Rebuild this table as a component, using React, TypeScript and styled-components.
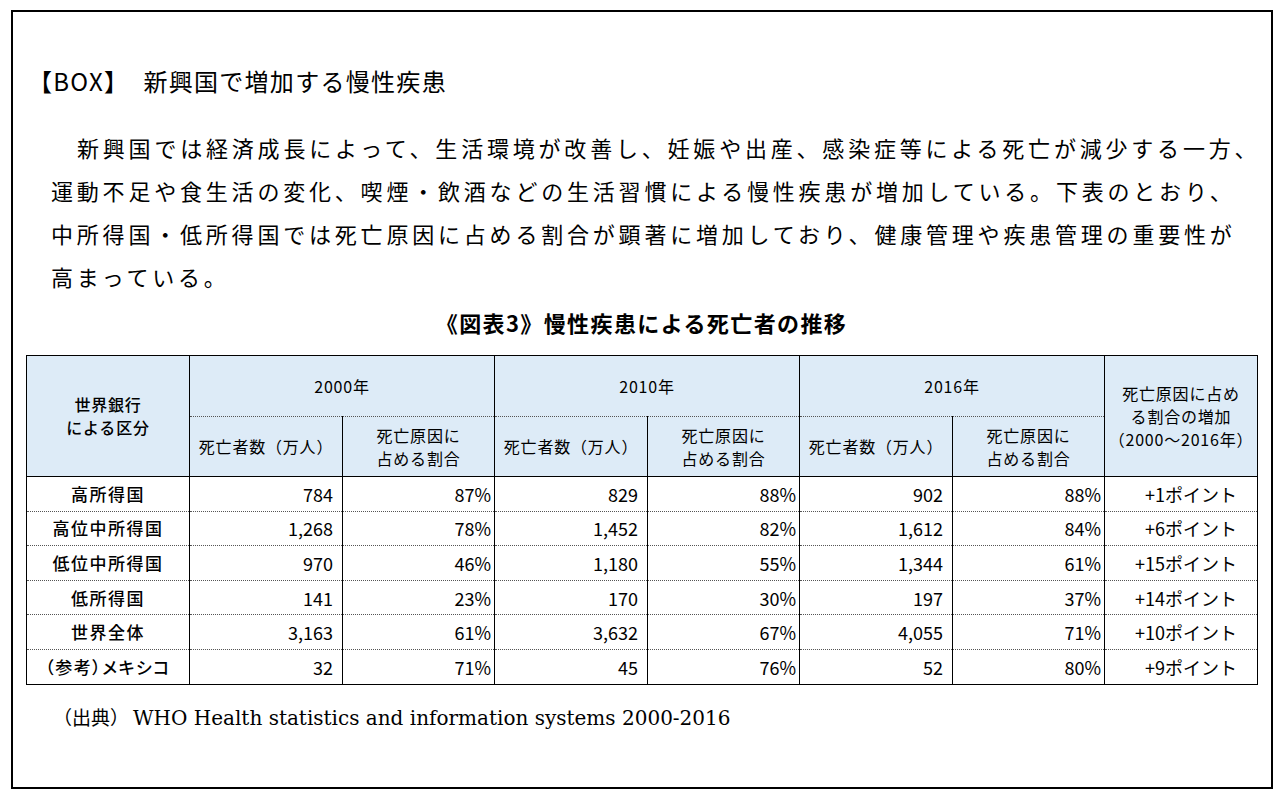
import React from "react";
import styled, { createGlobalStyle } from "styled-components";

const Global = createGlobalStyle`
  html, body { margin: 0; padding: 0; background: #fff; }
  body { font-family: "Noto Sans CJK JP", sans-serif; color: #000; }
`;

const Frame = styled.section`
  box-sizing: border-box;
  width: 1262px;
  height: 779px;
  margin: 10px 0 0 11px;
  border: 2px solid #000;
  padding: 54px 14px 0 13px;
  display: flex;
  flex-direction: column;
`;

const Heading = styled.h1`
  margin: 0 0 0 2px;
  font-family: "Noto Sans CJK JP", sans-serif;
  font-size: 24px;
  font-weight: 400;
  line-height: 30px;
  letter-spacing: 1.3px;
  white-space: nowrap;
`;

const HeadingGap = styled.span`
  display: inline-block;
  width: 14px;
`;

const Body = styled.p`
  margin: 30px 0 0 25px;
  font-family: "Noto Sans CJK JP", sans-serif;
  font-size: 22px;
  font-weight: 400;
  line-height: 43px;
  letter-spacing: 3.8px;
  text-indent: 26px;
  white-space: nowrap;
`;

const Caption = styled.h2`
  margin: 9px 0 0;
  text-align: center;
  font-family: "Noto Sans CJK JP", sans-serif;
  font-size: 22px;
  font-weight: 700;
  line-height: 30px;
  letter-spacing: 1.4px;
`;

const Table = styled.table`
  margin-top: 18px;
  border-collapse: collapse;
  table-layout: fixed;
  width: 1231px;
  border: 1px solid #000;
  font-family: "Noto Sans CJK JP", sans-serif;
`;

const Col = styled.col<{ $w: number }>`
  width: ${(p) => p.$w}px;
`;

const HeadCell = styled.th<{ $split?: boolean; $sub?: boolean; $h?: number; $strong?: boolean }>`
  box-sizing: border-box;
  height: ${(p) => p.$h ?? 60}px;
  padding: 0;
  background: #ddebf7;
  border: 1px solid #000;
  ${(p) => (p.$split ? "border-bottom: 1px dotted #555;" : "")}
  ${(p) => (p.$sub ? "border-top: 1px dotted #555;" : "")}
  font-size: 16px;
  font-weight: ${(p) => (p.$strong ? 500 : 400)};
  line-height: 23px;
  text-align: center;
  vertical-align: middle;
  letter-spacing: 0.8px;
`;

const Row = styled.tr`
  height: 34.6px;
`;

const Cell = styled.td<{ $kind: "label" | "num" | "pct" | "pt" }>`
  box-sizing: border-box;
  padding: 0
    ${(p) => (p.$kind === "num" ? 9 : p.$kind === "pct" ? 3 : p.$kind === "pt" ? 20 : 0)}px
    0 0;
  border-left: 1px solid #000;
  border-right: 1px solid #000;
  border-top: 1px dotted #555;
  border-bottom: 1px dotted #555;
  font-size: ${(p) => (p.$kind === "label" ? 17 : 18)}px;
  font-weight: ${(p) => (p.$kind === "label" ? 500 : 400)};
  line-height: 24px;
  text-align: ${(p) => (p.$kind === "label" ? "center" : "right")};
  letter-spacing: ${(p) => (p.$kind === "label" ? "1.5px" : "0")};
  font-feature-settings: ${(p) => (p.$kind === "label" ? '"palt"' : "normal")};
  white-space: nowrap;
`;

const Source = styled.p`
  margin: 18px 0 0 27px;
  font-family: "DejaVu Serif", "Noto Sans CJK JP", serif;
  font-size: 20px;
  line-height: 28px;
  white-space: nowrap;
`;

const SourceLabel = styled.span`
  font-family: "Noto Sans CJK JP", sans-serif;
  font-size: 19px;
  margin-right: 4px;
`;

const rows: string[][] = [
  ["高所得国", "784", "87%", "829", "88%", "902", "88%", "+1ポイント"],
  ["高位中所得国", "1,268", "78%", "1,452", "82%", "1,612", "84%", "+6ポイント"],
  ["低位中所得国", "970", "46%", "1,180", "55%", "1,344", "61%", "+15ポイント"],
  ["低所得国", "141", "23%", "170", "30%", "197", "37%", "+14ポイント"],
  ["世界全体", "3,163", "61%", "3,632", "67%", "4,055", "71%", "+10ポイント"],
  ["（参考）メキシコ", "32", "71%", "45", "76%", "52", "80%", "+9ポイント"],
];

const kinds: Array<"label" | "num" | "pct" | "pt"> = [
  "label",
  "num",
  "pct",
  "num",
  "pct",
  "num",
  "pct",
  "pt",
];

const widths = [163, 153, 152, 153, 152, 153, 152, 153];

const years = ["2000年", "2010年", "2016年"];

export default function App() {
  return (
    <>
      <Global />
      <Frame>
        <Heading>
          【BOX】<HeadingGap />新興国で増加する慢性疾患
        </Heading>
        <Body>
          新興国では経済成長によって、生活環境が改善し、妊娠や出産、感染症等による死亡が減少する一方、
          <br />
          運動不足や食生活の変化、喫煙・飲酒などの生活習慣による慢性疾患が増加している。下表のとおり、
          <br />
          中所得国・低所得国では死亡原因に占める割合が顕著に増加しており、健康管理や疾患管理の重要性が
          <br />
          高まっている。
        </Body>
        <Caption>《図表3》慢性疾患による死亡者の推移</Caption>
        <Table>
          <colgroup>
            {widths.map((w, i) => (
              <Col key={i} $w={w} />
            ))}
          </colgroup>
          <thead>
            <tr>
              <HeadCell rowSpan={2} $strong>
                世界銀行
                <br />
                による区分
              </HeadCell>
              {years.map((y) => (
                <HeadCell key={y} colSpan={2} $split $h={61}>
                  {y}
                </HeadCell>
              ))}
              <HeadCell rowSpan={2}>
                死亡原因に占め
                <br />
                る割合の増加
                <br />
                （2000〜2016年）
              </HeadCell>
            </tr>
            <tr>
              {years.map((y) => (
                <React.Fragment key={y}>
                  <HeadCell $sub>死亡者数（万人）</HeadCell>
                  <HeadCell $sub>
                    死亡原因に
                    <br />
                    占める割合
                  </HeadCell>
                </React.Fragment>
              ))}
            </tr>
          </thead>
          <tbody>
            {rows.map((r) => (
              <Row key={r[0]}>
                {r.map((v, i) => (
                  <Cell key={i} $kind={kinds[i]}>
                    {v}
                  </Cell>
                ))}
              </Row>
            ))}
          </tbody>
        </Table>
        <Source>
          <SourceLabel>（出典）</SourceLabel>WHO Health statistics and information systems 2000-2016
        </Source>
      </Frame>
    </>
  );
}
